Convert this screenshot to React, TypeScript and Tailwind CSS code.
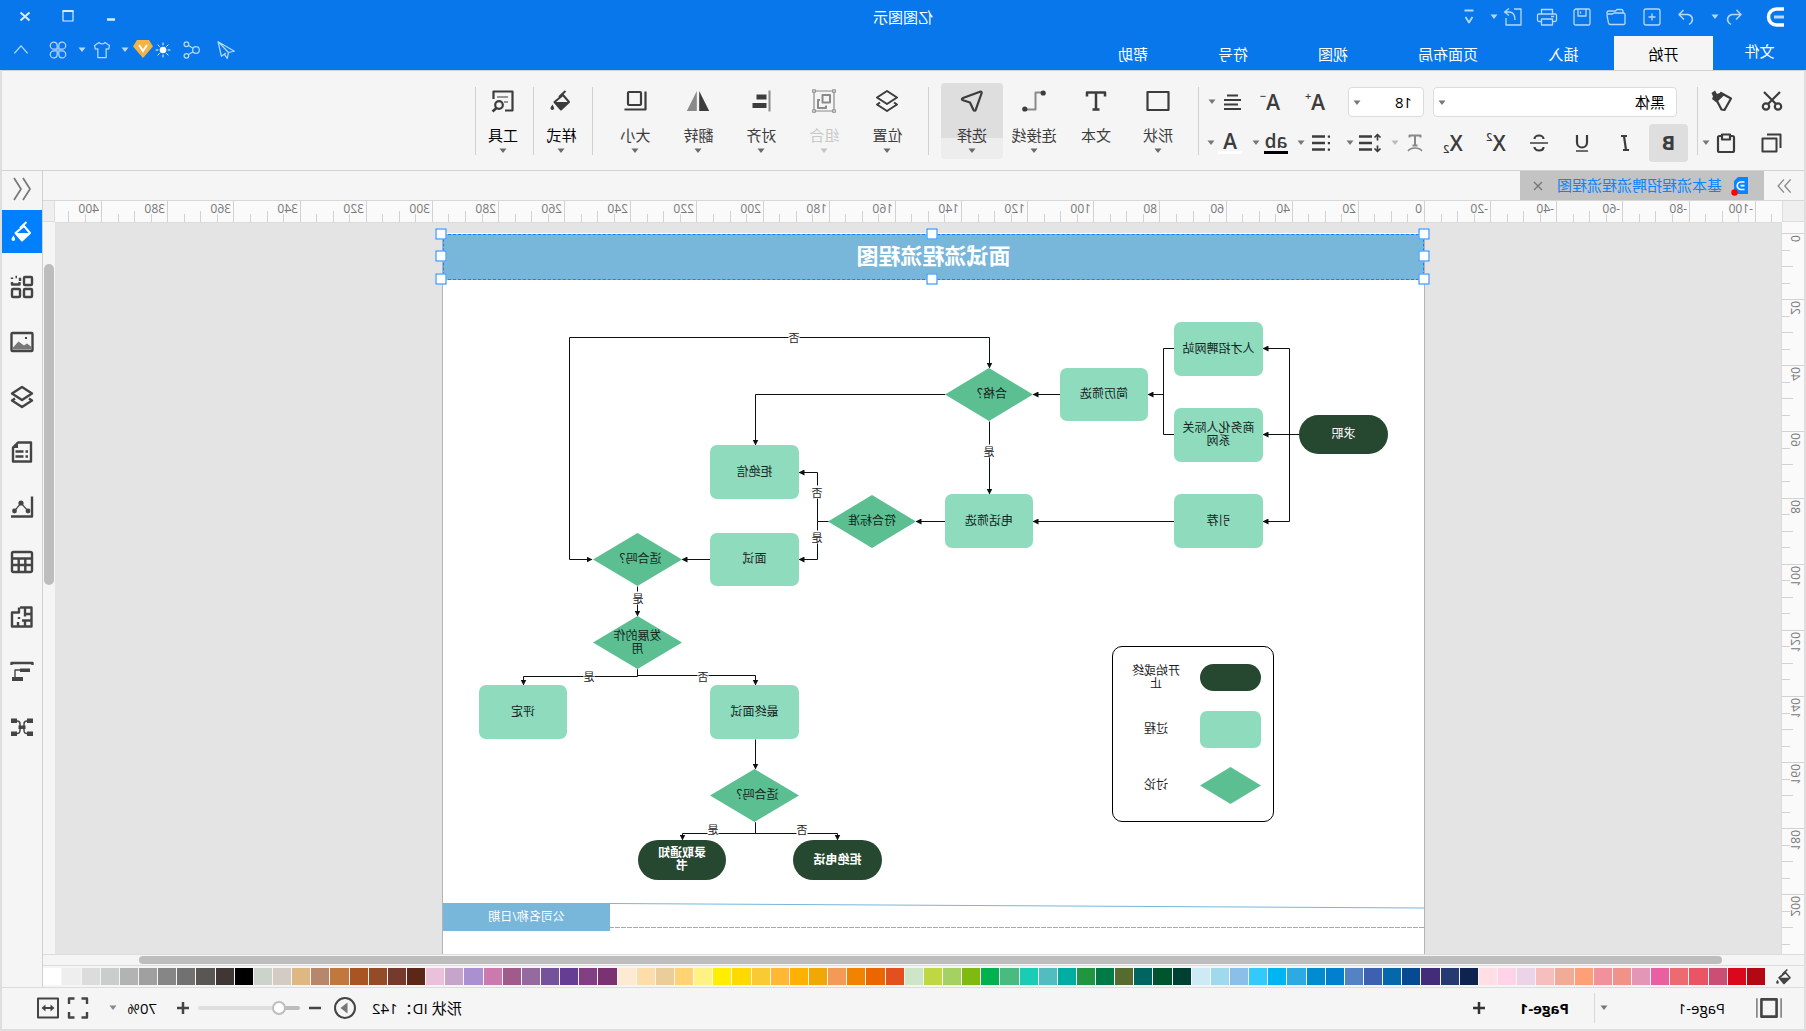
import React from "react";

type Kids = { children?: React.ReactNode };

function Svg({ size = 24, sw = 2, children }: Kids & { size?: number; sw?: number }) {
  return (
    <svg
      width={size}
      height={size}
      viewBox="0 0 24 24"
      fill="none"
      stroke="currentColor"
      strokeWidth={sw}
      strokeLinejoin="round"
      aria-hidden="true"
      className="shrink-0"
    >
      {children}
    </svg>
  );
}

function Caret({ className = "" }: { className?: string }) {
  return (
    <svg width="10" height="6" viewBox="0 0 10 6" fill="currentColor" aria-hidden="true" className={"shrink-0 " + className}>
      <path d="M1.5 0.5h7L5 5z" />
    </svg>
  );
}

function Btn({ label, className = "", children }: Kids & { label: string; className?: string }) {
  return (
    <button type="button" aria-label={label} className={"flex shrink-0 items-center justify-center " + className}>
      {children}
    </button>
  );
}

const F = { fill: "currentColor", stroke: "none" };

/* ---------- icons ---------- */
const icons: Record<string, React.ReactNode> = {
  undo: <path d="M9.5 5 5 9.500l5 5M5.500 9.500h8a5 5 0 0 1 3.500 8.500l-2 1.500" />,
  redo: <path d="M14.500 5 19 9.500l-5 5M18.500 9.500h-8a5 5 0 0 0-3.500 8.500l2 1.500" />,
  add: (
    <>
      <rect x="4" y="4" width="16" height="16" rx="2" />
      <path d="M12 8.500v7M8.500 12h7" />
    </>
  ),
  folder: (
    <>
      <path d="M5 8V6.500a2 2 0 0 1 2-2h4l1.500 1.500H19a2 2 0 0 1 2 2v1" />
      <path d="M3 18.500V9.500a1.500 1.500 0 0 1 1.500-1.500h9.500l1.500 1h4a1.500 1.500 0 0 1 1.500 1.500l-1.500 7.500a2 2 0 0 1-2 1.500H4.500A1.500 1.500 0 0 1 3 18.500z" />
    </>
  ),
  save: (
    <>
      <path d="M4 5.500A1.500 1.500 0 0 1 5.500 4h13L20 5.500v13a1.500 1.500 0 0 1-1.500 1.500h-13A1.500 1.500 0 0 1 4 18.500z" />
      <path d="M8 4v7h8V4M13.500 6.500v2" />
    </>
  ),
  print: (
    <>
      <path d="M6.500 9V4.500h11V9M6.500 16.500H4A1.500 1.500 0 0 1 2.500 15v-4.500A1.500 1.500 0 0 1 4 9h16a1.500 1.500 0 0 1 1.500 1.500V15a1.500 1.500 0 0 1-1.500 1.500h-2.500" />
      <path d="M6.500 14h11v6h-11zM5 11.500h3" />
    </>
  ),
  exportFile: (
    <>
      <path d="M11 4H4v16h15v-7" />
      <path d="M16 3.500 20.500 7 16 10.500M20 7h-4c-4 0-6 3-6 8" />
    </>
  ),
  send: <path d="M21.500 2 2 13.500l7 1.500L21.500 2l-4 17.500-5.500-4M9 15l1.500 7 3.500-5" />,
  share: (
    <>
      <circle cx="6" cy="12" r="4" />
      <circle cx="17.500" cy="5" r="2.800" />
      <circle cx="17.500" cy="19" r="2.800" />
      <path d="M9.500 10 15 6.500M9.500 14l5.500 3.500" />
    </>
  ),
  shirt: <path d="M8.500 3c1 2.200 6 2.200 7 0l5.500 3.500-1 4.500-3-.5V21H7V10.500l-3 .5-1-4.500z" />,
  petals: (
    <>
      <path d="M7 2.500h0a4 4 0 0 1 4 4V11H7a4.200 4.200 0 0 1 0-8.500z" />
      <path d="M17 2.500h0a4 4 0 0 0-4 4V11h4a4.200 4.200 0 0 0 0-8.500z" />
      <path d="M7 21.500h0a4 4 0 0 0 4-4V13H7a4.200 4.200 0 0 0 0 8.500z" />
      <path d="M17 21.500h0a4 4 0 0 1-4-4V13h4a4.200 4.200 0 0 1 0 8.500z" />
    </>
  ),
  cut: (
    <>
      <path d="M4 3l12 12M20 3 8 15" />
      <circle cx="6" cy="17.500" r="3.200" />
      <circle cx="18" cy="17.500" r="3.200" />
    </>
  ),
  brush: (
    <>
      <path d="M3 9.500 13 4l4.500 7-5 9.500-3 .5z" strokeWidth="2.200" />
      <path d="M9.500 6 13 3.500l4 1.500L19 1.500l3.500 2.500L21 7.500l1 2.500-4.500 3.500z" {...F} />
    </>
  ),
  copy: (
    <>
      <path d="M3.500 17V3.500H17" />
      <rect x="7.500" y="7.500" width="14" height="13" />
    </>
  ),
  paste: (
    <>
      <rect x="4" y="5" width="16" height="16" rx="1.500" />
      <path d="M8 3.500h8v5H8z" fill="#f5f5f5" />
    </>
  ),
  italic: <path d="M10 5h6M8 19h6M13 5l-2 14" />,
  underline: (
    <>
      <path d="M7 4v7.500a4.500 4.500 0 0 0 10 0V4" />
      <path d="M6 20h12" strokeWidth="1.500" />
    </>
  ),
  strike: (
    <>
      <path d="M16.500 8c0-2-2-3.500-4.500-3.500S7.500 6 7.500 8M7.500 16c0 2.200 2 3.500 4.500 3.500s4.500-1.500 4.500-3.500" />
      <path d="M3 12h18" strokeWidth="1.500" />
    </>
  ),
  clearFmt: (
    <>
      <path d="M6.500 6.500V4.500h11v2M12 4.500v10M9.500 14.500h5" />
      <path d="M5 20c3-4 11-4 14 0" strokeWidth="1.500" />
    </>
  ),
  alignR: <path d="M6 5.500h11M3 10h17M6 14.500h14M3 19h17" />,
  lineH: (
    <>
      <path d="M10 5.500h13M10 12h13M10 18.500h13" />
      <path d="M4.500 4.500v5M4.500 14.500v5M1.500 6.500l3-3 3 3M1.500 17.500l3 3 3-3" strokeWidth="1.700" />
    </>
  ),
  list: (
    <>
      <path d="M8 5.500h13M8 12h13M8 18.500h13" />
      <path d="M3 4.500h2.200v2.200H3zM3 11h2.200v2.200H3zM3 17.500h2.200v2.200H3z" {...F} />
    </>
  ),
  rect: <rect x="1.500" y="3" width="21" height="18" strokeWidth="2.200" />,
  text: <path d="M3 7.500V3.500h18v4M12 3.500v17M8.500 20.500h7" strokeWidth="2.500" />,
  connector: (
    <>
      <path d="M3 3.500h7.500v17H20" stroke="#8a8a8a" strokeWidth="2" />
      <circle cx="2.800" cy="4" r="2.600" {...F} />
      <circle cx="21.200" cy="20" r="2.600" {...F} />
    </>
  ),
  select: <path d="M2.500 4.500c-.6-1.500.3-2.200 1.500-1.800L21 9c1.500.6 1.500 1.800 0 2.200l-7 2.300-3.500 7.500c-.5 1-1.800 1-2.200-.2z" strokeWidth="2.200" />,
  layers: (
    <>
      <path d="M12 2 22 8.500 12 15 2 8.500z" />
      <path d="m5 13.500-3 2L12 22l10-6.500-3-2" />
    </>
  ),
  group: (
    <>
      <path d="M2 2h20v20H2z" strokeWidth="1.200" stroke="#8a8a8a" />
      <path
        d="M.7.7h2.600v2.600H.7zM20.700.7h2.600v2.600h-2.600zM.7 20.700h2.600v2.600H.7zM20.700 20.700h2.600v2.600h-2.600z"
        fill="#f5f5f5"
        strokeWidth="1.100"
        stroke="#8a8a8a"
      />
      <path d="M6 6h7.500v7.500H6z" strokeWidth="2" stroke="#8a8a8a" />
      <path d="M16 11h2v8h-8v-2.500" strokeWidth="2" stroke="#8a8a8a" />
    </>
  ),
  align: (
    <>
      <path d="M3.500 1.500v21" stroke="#8a8a8a" strokeWidth="2" />
      <path d="M6.500 5.500h10v5h-10zM6.500 14h14v5h-14z" {...F} />
    </>
  ),
  flip: (
    <>
      <path d="M10.800 2v20H.8z" {...F} />
      <path d="M13.200 2v20h10z" fill="#8a8a8a" stroke="none" />
    </>
  ),
  size: (
    <>
      <rect x="6" y="3" width="13" height="13" rx="1" strokeWidth="2.200" />
      <path d="M1.500 2.500v18H22.500" strokeWidth="2.200" />
    </>
  ),
  bucket: (
    <>
      <path d="M10 6 18.500 13 12 20.500 4 13z" />
      <path d="M4 13h14.500L12 21z" {...F} />
      <path d="M7.500 2 14 8" />
      <path d="M20.500 15.500c1.600 2.200 2 3 2 3.800a1.800 1.800 0 0 1-3.600 0c0-.8.400-1.600 1.600-3.800z" {...F} />
    </>
  ),
  tools: (
    <>
      <path d="M10 21.500H2.500v-19h19V10" strokeWidth="2.200" />
      <path d="M7 8h11M7 13h4" strokeWidth="1.600" stroke="#777" />
      <circle cx="16" cy="16" r="3.800" strokeWidth="2.200" />
      <path d="m18.500 19 4 3.500" strokeWidth="2.600" />
    </>
  ),
  chevL: <path d="M11 1 4 12l7 11M20 1l-7 11 7 11" />,
  chevR: <path d="M4 4l7 8-7 8M12 4l7 8-7 8" />,
  apps: (
    <>
      <rect x="2" y="2" width="8" height="8" rx="1" />
      <path d="M14 6V2.800M17 2h1.500M22 2.500v1.500M22 7v2.500h-7.500V7" />
      <rect x="2" y="14" width="8" height="8" rx="1" />
      <rect x="14" y="14" width="8" height="8" rx="1" />
    </>
  ),
  image: (
    <>
      <rect x="1.500" y="3" width="21" height="18" rx="1" />
      <path d="M3 19.500v-3l4-3 3 2 5.500-4 5.500 6v2z" fill="#777" stroke="none" />
      <path d="M7 7h2v2H7z" {...F} />
    </>
  ),
  doc: (
    <>
      <path d="M3 2.500h13l5 5v14H3z" />
      <path d="M16 2.500v5.500h5z" {...F} />
      <path d="M6 11.500h2.500M10.500 11.500h8M6 16.500h2.500M10.500 16.500h8" />
    </>
  ),
  chart: (
    <>
      <path d="M2 1.500v20h21" />
      <path d="M6 16 13 8l6.500 8" strokeWidth="1.200" />
      <circle cx="6" cy="16" r="2.400" {...F} />
      <circle cx="13" cy="8" r="2.600" {...F} />
      <circle cx="19.500" cy="16" r="2.400" {...F} />
    </>
  ),
  table: (
    <>
      <rect x="2" y="2" width="20" height="20" rx="1.500" />
      <path d="M2 8.500h20M2 15h20M8.700 8.500V22M15.300 8.500V22" />
    </>
  ),
  floor: (
    <>
      <path d="M14 2.500H2.500v19H22V7.500h-7V2.500" />
      <path d="M2.500 9H9V2.500M9 9v2.500M2.500 15.500H9V22M9 15.500h3M15 14v-2M16 21.500V17" />
    </>
  ),
  gantt: (
    <>
      <path d="M1.500 5V3h21v2" strokeWidth="2.400" />
      <path d="M4 8.500h10v3.500H4zM11 17h11v4H11z" {...F} />
      <path d="M14 10h5v7" strokeWidth="1.400" />
    </>
  ),
  mind: (
    <>
      <path d="M1 3.500h6v4.500H1zM17 3.500h6v4.500h-6zM1 16.500h6v4.500H1zM17 16.500h6v4.500h-6zM8.500 10.500h7v3.500h-7z" {...F} />
      <path d="M7 6c3 0 3 1.500 3 3v6c0 2 0 3.500-3 3.500M17 6c-3 0-3 1.500-3 3v6c0 2 0 3.500 3 3.500" strokeWidth="1.500" />
    </>
  ),
  pageView: (
    <>
      <rect x="5" y="4" width="14" height="16" strokeWidth="2.400" />
      <path d="M.8 3v18M23.200 3v18" stroke="#888" strokeWidth="1.600" />
    </>
  ),
  play: (
    <>
      <circle cx="12" cy="12" r="10" />
      <path d="M9.500 6.500v11l7-5.500z" fill="#777" stroke="none" />
    </>
  ),
  full: <path d="M3 8V2.500h5.500M15.500 2.500H21V8M21 16v5.500h-5.500M8.500 21.500H3V16" strokeWidth="2.400" />,
  fit: (
    <>
      <rect x="2" y="2.500" width="20" height="19" strokeWidth="2" />
      <path d="M7 12h10" strokeWidth="2" />
      <path d="M9.500 8.500v7L5.500 12zM14.500 8.500v7l4-3.500z" {...F} />
    </>
  ),
};

/* ---------- header ---------- */
function Header() {
  return (
    <header className="h-[70px] shrink-0 bg-[#0977ec] text-[15px] text-white">
      <div className="grid h-[34px] grid-cols-[1fr_auto_1fr] items-center">
        <div className="flex items-center pl-[19px] text-[#b5d8fb]">
          <svg width="24" height="24" viewBox="0 0 24 24" fill="none" stroke="#fff" strokeWidth="3.500" aria-hidden="true">
            <path d="M3 4h7.500a8 8 0 0 1 0 16H3" />
            <path d="M3 12h10" stroke="#b5d8fb" strokeWidth="3" />
          </svg>
          <Btn label="撤销" className="ml-[17px]"><Svg sw={1.500}>{icons.undo}</Svg></Btn>
          <Caret className="ml-[2px]" />
          <Btn label="重做" className="ml-3"><Svg sw={1.500}>{icons.redo}</Svg></Btn>
          <Btn label="新建" className="ml-[10px]"><Svg sw={1.300}>{icons.add}</Svg></Btn>
          <Btn label="打开" className="ml-3"><Svg sw={1.300}>{icons.folder}</Svg></Btn>
          <Btn label="保存" className="ml-[10px]"><Svg sw={1.300}>{icons.save}</Svg></Btn>
          <Btn label="打印" className="ml-[11px]"><Svg sw={1.300}>{icons.print}</Svg></Btn>
          <Btn label="导出" className="ml-[10px]"><Svg sw={1.300}>{icons.exportFile}</Svg></Btn>
          <Caret className="ml-[2px]" />
          <Btn label="更多" className="ml-2">
            <Svg sw={1.800}><path d="M7.500 5.500h9M8.500 12l3.500 5.500 3.500-5.500" /></Svg>
          </Btn>
        </div>
        <h1>亿图图示</h1>
        <div className="flex items-center justify-end gap-[19px] pr-[13px] text-[#d9ecff]">
          <Btn label="最小化"><Svg><path d="M8 14.500h8" strokeWidth="2.500" /></Svg></Btn>
          <Btn label="最大化"><Svg sw={1.200}><rect x="7" y="6" width="10" height="10" /><path d="M6.500 6h11" strokeWidth="2" /></Svg></Btn>
          <Btn label="关闭"><Svg><path d="m7.500 7.500 9 8M16.500 7.500l-9 8" /></Svg></Btn>
        </div>
      </div>
      <div className="flex h-[36px] items-end justify-between">
        <nav className="flex h-[34px] items-center">
          <button type="button" className="h-full w-[93px] pb-1">文件</button>
          <button type="button" className="h-full w-[99px] bg-[#f5f5f5] pt-[2px] text-black">开始</button>
          <button type="button" className="h-full w-[101px] pt-[2px]">插入</button>
          <button type="button" className="h-full w-[130px] pt-[2px]">页面布局</button>
          <button type="button" className="h-full w-[100px] pt-[2px]">视图</button>
          <button type="button" className="h-full w-[100px] pt-[2px]">符号</button>
          <button type="button" className="h-full w-[100px] pt-[2px]">帮助</button>
        </nav>
        <div className="flex h-[40px] items-center pr-[11px] text-[#b5d8fb]">
          <Btn label="发送"><Svg size={20} sw={1.500}>{icons.send}</Svg></Btn>
          <Btn label="分享" className="ml-[15px]"><Svg size={20} sw={1.500}>{icons.share}</Svg></Btn>
          <Btn label="提示" className="ml-[10px] text-white">
            <Svg size={16} sw={1.500}>
              <circle cx="12" cy="12" r="5" fill="currentColor" stroke="none" />
              <path d="M12 1v4M12 19v4M1 12h4M19 12h4M4 4l3 3M17 17l3 3M20 4l-3 3M7 17l-3 3" />
            </Svg>
          </Btn>
          <Btn label="会员" className="ml-[2px]">
            <svg width="20" height="22" viewBox="0 0 20 22" aria-hidden="true">
              <path d="M4 1h12l4 6.500L10 19 0 7.500z" fill="#f5b342" />
              <path d="M6 6 10 12l4-6" fill="none" stroke="#fff" strokeWidth="2" />
            </svg>
          </Btn>
          <Caret className="ml-[3px]" />
          <Btn label="主题" className="ml-2"><Svg size={20} sw={1.500}>{icons.shirt}</Svg></Btn>
          <Caret className="ml-[5px]" />
          <Btn label="应用" className="ml-[9px]"><Svg size={20} sw={1.500}>{icons.petals}</Svg></Btn>
          <Btn label="折叠功能区" className="ml-[17px]"><Svg size={20} sw={1.600}><path d="m4 16 8-9 8 9" /></Svg></Btn>
        </div>
      </div>
    </header>
  );
}

/* ---------- ribbon ---------- */
function Divider() {
  return <div className="mt-4 h-[68px] w-px shrink-0 bg-[#d0d0d0]" />;
}

function Picker({ label, options, className }: { label: string; options: string[]; className: string }) {
  return (
    <div className={"relative h-[30px] shrink-0 rounded-sm border border-[#dcdcdc] bg-white " + className}>
      <select aria-label={label} className="h-full w-full appearance-none bg-transparent pl-[11px] text-[15px] text-black outline-none">
        {options.map((o) => (
          <option key={o}>{o}</option>
        ))}
      </select>
      <Caret className="pointer-events-none absolute top-3 right-[3px] text-[#777]" />
    </div>
  );
}

function Glyph({ children, mark, sub }: Kids & { mark: string; sub?: boolean }) {
  return (
    <span className="flex h-6 w-6 items-center justify-center text-[21px] leading-6 font-semibold">
      {children}
      <span className={"text-[11px] leading-3 " + (sub ? "self-end" : "self-start")}>{mark}</span>
    </span>
  );
}

function Big({
  label,
  icon,
  className = "w-[62px]",
  labelClass = "",
  caret = true,
}: {
  label: string;
  icon: string;
  className?: string;
  labelClass?: string;
  caret?: boolean;
}) {
  return (
    <button type="button" className={"mt-3 flex h-[76px] shrink-0 flex-col items-center rounded-sm pt-[6px] " + className}>
      <Svg>{icons[icon]}</Svg>
      <span className={"mt-[11px] h-[22px] text-[15px] leading-[22px] whitespace-nowrap " + labelClass}>{label}</span>
      {caret && <Caret className="mt-[2px] opacity-75" />}
    </button>
  );
}

function Ribbon() {
  return (
    <div role="toolbar" aria-label="开始" className="flex h-[101px] shrink-0 items-start border-y border-[#d2d2d2] text-[#3c3c3c]">
      <div className="flex w-[106px] shrink-0 flex-col gap-[7px] pt-4 pl-5">
        <div className="flex h-[30px] items-center pb-[2px]">
          <Btn label="剪切"><Svg sw={2.200}>{icons.cut}</Svg></Btn>
          <Btn label="格式刷" className="ml-[26px]"><Svg>{icons.brush}</Svg></Btn>
        </div>
        <div className="flex h-[38px] items-center">
          <Btn label="复制"><Svg>{icons.copy}</Svg></Btn>
          <Btn label="粘贴" className="ml-[22px]"><Svg sw={2.200}>{icons.paste}</Svg></Btn>
          <Caret className="ml-[3px] text-[#777]" />
        </div>
      </div>
      <Divider />
      <div className="flex w-[498px] shrink-0 flex-col gap-[7px] pt-4">
        <div className="flex h-[30px] items-center pl-5">
          <Picker label="字体" options={["黑体"]} className="w-[244px]" />
          <Picker label="字号" options={["18"]} className="ml-[9px] w-[76px]" />
          <Btn label="增大字号" className="ml-[21px]"><Glyph mark="+">A</Glyph></Btn>
          <Btn label="减小字号" className="ml-[21px]"><Glyph mark="−">A</Glyph></Btn>
          <Btn label="对齐方式" className="ml-[14px]"><Svg sw={2.200}>{icons.alignR}</Svg></Btn>
          <Caret className="ml-[3px] text-[#777]" />
        </div>
        <div className="flex h-[38px] items-center pl-[9px]">
          <Btn label="加粗" className="h-[38px] w-[39px] rounded-sm bg-[#dedede]">
            <span className="text-[20px] font-bold">B</span>
          </Btn>
          <Btn label="倾斜" className="ml-3"><Svg sw={2.200}>{icons.italic}</Svg></Btn>
          <Btn label="下划线" className="ml-[19px]"><Svg sw={2.200}>{icons.underline}</Svg></Btn>
          <Btn label="删除线" className="ml-[19px]"><Svg sw={2.200}>{icons.strike}</Svg></Btn>
          <Btn label="上标" className="ml-[19px]"><Glyph mark="2">X</Glyph></Btn>
          <Btn label="下标" className="ml-[19px]"><Glyph mark="2" sub>X</Glyph></Btn>
          <Btn label="清除格式" className="ml-[14px] text-[#888]"><Svg sw={2}>{icons.clearFmt}</Svg></Btn>
          <Caret className="ml-[3px] text-[#bbb]" />
          <Btn label="行距" className="ml-2"><Svg sw={2.400}>{icons.lineH}</Svg></Btn>
          <Caret className="ml-[3px] text-[#777]" />
          <Btn label="项目符号" className="ml-3"><Svg sw={2.400}>{icons.list}</Svg></Btn>
          <Caret className="ml-[3px] text-[#777]" />
          <Btn label="突出显示" className="ml-2">
            <span className="h-[22px] w-6 border-b-3 border-black text-center text-[19px] leading-[18px] font-semibold">ab</span>
          </Btn>
          <Caret className="ml-[3px] text-[#777]" />
          <Btn label="字体颜色" className="ml-[9px]">
            <span className="h-[22px] w-6 border-b-3 border-white text-center text-[21px] leading-[18px] font-semibold">A</span>
          </Btn>
          <Caret className="ml-[2px] text-[#777]" />
        </div>
      </div>
      <Divider />
      <div className="ml-[9px] flex">
        <Big label="形状" icon="rect" />
        <Big label="文本" icon="text" caret={false} />
        <Big label="连接线" icon="connector" />
        <Big label="选择" icon="select" className="w-[62px] bg-[linear-gradient(#dedede_55px,#ededed_55px)]" />
      </div>
      <div className="w-3" />
      <Divider />
      <div className="mr-[11px] ml-[9px] flex">
        <Big label="位置" icon="layers" className="w-[63px]" />
        <Big label="组合" icon="group" className="w-[63px] text-[#b4b4b4]" labelClass="text-[#c8c8c8]" />
        <Big label="对齐" icon="align" className="w-[63px]" />
        <Big label="翻转" icon="flip" className="w-[63px]" />
        <Big label="大小" icon="size" className="w-[63px]" />
      </div>
      <Divider />
      <Big label="样式" icon="bucket" className="w-[58px] pl-[3px]" labelClass="text-black" />
      <Divider />
      <Big label="工具" icon="tools" className="w-[57px] pl-[3px]" labelClass="text-black" />
      <Divider />
    </div>
  );
}

/* ---------- rulers ---------- */
const UNIT = 3.307;

function range(from: number, to: number, step: number) {
  const out: number[] = [];
  for (let v = from; v <= to; v += step) out.push(v);
  return out;
}

function RulerH() {
  return (
    <svg width="100%" height="21" className="block bg-[#fafafa] text-[12px]" aria-label="水平标尺">
      {range(-105, 410, 5).map((v) => {
        const x = Math.round(357 + v * UNIT);
        const y = v % 20 === 0 ? 0 : v % 10 === 0 ? 10 : 13;
        return <rect key={v} x={x} y={y} width="1" height={21 - y} fill="#d2d2d2" />;
      })}
      {range(-100, 400, 20).map((v) => (
        <text key={v} x={Math.round(357 + v * UNIT) + 3} y="12" fill="#777">
          {v}
        </text>
      ))}
    </svg>
  );
}

function RulerV() {
  return (
    <svg width="22" height="100%" className="block bg-[#fafafa] text-[12px]" aria-label="垂直标尺">
      {range(0, 240, 5).map((v) => {
        const y = Math.round(11 + v * UNIT);
        const w = v % 20 === 0 ? 22 : v % 10 === 0 ? 11 : 8;
        return <rect key={v} x={22 - w} y={y} width={w} height="1" fill="#d2d2d2" />;
      })}
      {range(0, 200, 20).map((v) => {
        const y = Math.round(11 + v * UNIT) + 2;
        return (
          <text key={v} x="13" y={y} textAnchor="end" transform={"rotate(-90 13 " + y + ")"} fill="#777">
            {v}
          </text>
        );
      })}
    </svg>
  );
}

/* ---------- diagram ---------- */
type Kind = "process" | "decision" | "terminal" | "outcome";
type Node = { kind: Kind; x: number; y: number; w: number; h: number; text: string };

const nodes: Node[] = [
  { kind: "terminal", x: 37, y: 182, w: 89, h: 39, text: "求职" },
  { kind: "process", x: 162, y: 89, w: 89, h: 54, text: "人才招聘网站" },
  { kind: "process", x: 162, y: 175, w: 89, h: 54, text: "商务化人际关系网" },
  { kind: "process", x: 162, y: 261, w: 89, h: 54, text: "引荐" },
  { kind: "process", x: 277, y: 135, w: 88, h: 53, text: "简历筛选" },
  { kind: "decision", x: 392, y: 135, w: 88, h: 53, text: "合格？" },
  { kind: "process", x: 392, y: 261, w: 88, h: 54, text: "电话筛选" },
  { kind: "decision", x: 509, y: 262, w: 88, h: 53, text: "符合标准" },
  { kind: "process", x: 626, y: 212, w: 89, h: 54, text: "拒绝信" },
  { kind: "process", x: 626, y: 300, w: 89, h: 53, text: "面试" },
  { kind: "decision", x: 743, y: 300, w: 89, h: 53, text: "适合吗？" },
  { kind: "decision", x: 743, y: 383, w: 89, h: 53, text: "发展的作用" },
  { kind: "process", x: 858, y: 452, w: 88, h: 54, text: "评定" },
  { kind: "process", x: 626, y: 452, w: 89, h: 54, text: "最终面试" },
  { kind: "decision", x: 626, y: 536, w: 89, h: 53, text: "适合吗？" },
  { kind: "outcome", x: 699, y: 607, w: 88, h: 40, text: "录取通知书" },
  { kind: "outcome", x: 543, y: 607, w: 89, h: 40, text: "拒绝电话" },
  { kind: "terminal", x: 164, y: 431, w: 61, h: 27, text: "" },
  { kind: "process", x: 164, y: 478, w: 61, h: 37, text: "" },
  { kind: "decision", x: 164, y: 534, w: 61, h: 37, text: "" },
];

const kindClass: Record<Kind, string> = {
  process: "rounded-[7px] bg-[#8edbbd] px-[7px] text-[#16241d]",
  decision: "bg-[#5bbf92] px-[18px] text-[#16241d] [clip-path:polygon(50%_0,100%_50%,50%_100%,0_50%)]",
  terminal: "rounded-full bg-[#274830] px-[7px] text-white",
  outcome: "rounded-full bg-[#274830] px-[18px] font-bold text-white",
};

const arrows = [
  "M136 201V115H162",
  "M126 201H162",
  "M136 201V288H162",
  "M262 161H277",
  "M365 161H392",
  "M251 288H392",
  "M436 188V260",
  "M480 161H670V211",
  "M856 326V104H436V134",
  "M480 288H509",
  "M608 288V239H626",
  "M608 288V326H626",
  "M715 326H743",
  "M788 353V382",
  "M788 436V442H670V451",
  "M788 436V443H902V451",
  "M670 506V535",
  "M670 589V600H743V606",
  "M670 589V600H588V606",
  "M856 326H834",
];

const plain = ["M251 115H262V201H251", "M596 288H608"];

const tags: [number, number, string][] = [
  [631, 104, "否"],
  [436, 218, "是"],
  [608, 259, "否"],
  [608, 304, "是"],
  [787, 365, "是"],
  [836, 443, "是"],
  [722, 443, "否"],
  [712, 596, "是"],
  [623, 596, "否"],
];

const legend: [number, string][] = [
  [444, "开始或终止"],
  [495, "过程"],
  [551, "讨论"],
];

const handles: [number, number][] = [
  [0, 1], [0, 23], [0, 46], [492, 1], [492, 46], [983, 1], [983, 23], [983, 46],
];

function Diagram() {
  return (
    <div className="relative mt-[10px] ml-[356px] h-full w-[983px] shrink-0 border-x border-[#b4b4b4] bg-white text-[12px] leading-[13px]">
      <div className="absolute top-px right-0 left-0 flex h-[46px] items-center justify-center border border-dashed border-[#0a84ff] bg-[#78b6da] pb-[4px] text-[22px] font-bold text-white">
        面试流程流程图
      </div>
      {handles.map(([x, y]) => (
        <span
          key={x + "-" + y}
          className="absolute h-[11px] w-[11px] -translate-x-1/2 -translate-y-1/2 border border-[#0a84ff] bg-white"
          style={{ left: x, top: y }}
        />
      ))}
      <div className="absolute top-[413px] left-[150px] h-[176px] w-[162px] rounded-[10px] border border-black" />
      <svg className="absolute top-0 left-0" width="981" height="722" fill="none" stroke="#0c130f" aria-hidden="true">
        <defs>
          <marker id="head" viewBox="0 0 6 6" refX="5" refY="3" markerWidth="6" markerHeight="6" orient="auto">
            <path d="M0 0 6 3 0 6z" fill="#0c130f" stroke="none" />
          </marker>
        </defs>
        <g transform="translate(-1.5 .5)">
          {arrows.map((d) => (
            <path key={d} d={d} markerEnd="url(#head)" />
          ))}
          {plain.map((d) => (
            <path key={d} d={d} />
          ))}
        </g>
        <path d="M0 675 815 670.500" stroke="#78b6da" />
        <path d="M0 694.500H815" stroke="#a8a8a8" strokeDasharray="5 1" />
      </svg>
      {nodes.map((n) => (
        <div
          key={n.x + "-" + n.y}
          className={"absolute flex items-center justify-center pb-[2px] text-center " + kindClass[n.kind]}
          style={{ left: n.x - 1, top: n.y, width: n.w, height: n.h }}
        >
          {n.text}
        </div>
      ))}
      {tags.map(([x, y, t]) => (
        <span
          key={x + "-" + y}
          className="absolute -translate-x-1/2 -translate-y-1/2 bg-white text-[11px] text-[#222]"
          style={{ left: x - 1, top: y }}
        >
          {t}
        </span>
      ))}
      {legend.map(([y, t]) => (
        <span key={t} className="absolute w-[52px] -translate-x-1/2 -translate-y-1/2 text-center text-[#222]" style={{ left: 268, top: y }}>
          {t}
        </span>
      ))}
      <div className="absolute top-[670px] right-0 flex h-[28px] w-[167px] items-center justify-center bg-[#78b6da] pb-[2px] text-white">
        公司名称/日期
      </div>
    </div>
  );
}

/* ---------- palette ---------- */
const palette =
  "b40714 db081d c94f77 e95565 ec6a70 e95f9f e396b5 f0918a f2909b ff9f78 f2ab96 f6bfbd ebd4ea ffd4e6 ffdfe5 0e2350 243a70 432c78 084a92 0468ab 3e60b0 5582c5 0080cf 008ccf 2daae4 00b5f1 33c9fa 8abfea 9ed9ee cdeaf5 004033 00552f 006460 556b2f 007a47 1f963f 00ada0 52bdc0 1accb4 4abb80 00b150 80b910 a5d062 bed742 cde6c7 e2501f ea6700 f08300 f29a56 f1a706 ffb000 ffb833 f9ca34 ffd900 ffee00 fef284 ffd274 eacd98 ffddab fdead2 7a3272 823f84 663d94 74539a 956a9f a05a8c cb7ab0 aa90d0 c6a5cb ebc0da 5b2818 75392d 944c27 a95423 c1783f b6866d dfb783 d4cbc5 cbd3cb 000000 3e3736 595656 717171 868686 9fa09f b2b4b3 cbcdcc dcdcdc eeeeee ffffff".split(" ");

function Workspace() {
  return (
    <div className="flex min-w-0 flex-1 flex-col">
      <div className="flex h-[30px] shrink-0 items-stretch border-b border-[#d8d8d8]">
        <Btn label="展开左侧面板" className="w-10 text-[#888]"><Svg size={20} sw={1.600}>{icons.chevR}</Svg></Btn>
        <div className="flex w-[244px] items-center bg-[#c3c3c3] pl-[15px]">
          <svg width="18" height="20" viewBox="0 0 18 20" aria-hidden="true">
            <path d="M1 1h10l4 4v13H1z" fill="#0a84ff" />
            <path d="M4.500 6h3.500a3.500 3.500 0 0 1 0 7.500H4.500M4.500 9.700h4" fill="none" stroke="#fff" strokeWidth="1.700" />
            <circle cx="14.500" cy="16.500" r="3.200" fill="#f00" />
          </svg>
          <a href="#doc" className="ml-[9px] text-[15px] whitespace-nowrap text-[#0a84ff]">基本流程招聘流程流程图</a>
          <Btn label="关闭标签" className="ml-[13px] text-[#777]">
            <svg width="12" height="12" viewBox="0 0 12 12" fill="none" stroke="currentColor" strokeWidth="1.400"><path d="m2 2 8 8M10 2l-8 8" /></svg>
          </Btn>
        </div>
      </div>
      <div className="grid min-h-0 flex-1 grid-cols-[22px_minmax(0,1fr)_12px] grid-rows-[21px_minmax(0,1fr)_12px]">
        <div className="border-r border-b border-[#dcdcdc] bg-[#efefef]" />
        <div className="overflow-hidden"><RulerH /></div>
        <div className="border-b border-l border-[#dcdcdc] bg-[#efefef]" />
        <div className="overflow-hidden"><RulerV /></div>
        <main className="overflow-hidden border-t border-l border-[#dcdcdc] bg-[#e4e4e4]"><Diagram /></main>
        <div className="px-px pt-[42px]"><div className="h-[321px] rounded-full bg-[#bdbdbd]" /></div>
        <div className="col-span-3 border-y border-[#dcdcdc] py-px pr-[96px] pl-[82px]"><div className="h-full rounded-full bg-[#bdbdbd]" /></div>
      </div>
      <div className="flex h-[21px] shrink-0 items-center">
        <Btn label="填充颜色" className="w-[39px]"><Svg size={18} sw={2.200}>{icons.bucket}</Svg></Btn>
        <div className="flex h-[17px] flex-1 gap-px">
          {palette.map((c) => (
            <button key={c} type="button" aria-label={"#" + c} className="h-full flex-1" style={{ backgroundColor: "#" + c }} />
          ))}
        </div>
      </div>
    </div>
  );
}

const side = [
  ["符号库", "apps"],
  ["图像", "image"],
  ["图层", "layers"],
  ["备注", "doc"],
  ["图表", "chart"],
  ["表格", "table"],
  ["平面图", "floor"],
  ["甘特图", "gantt"],
  ["思维导图", "mind"],
];

function Sidebar() {
  return (
    <aside className="flex w-[41px] shrink-0 flex-col border-l border-[#d0d0d0]">
      <Btn label="折叠面板" className="h-[39px] pb-1 text-[#777]"><Svg sw={1.700}>{icons.chevL}</Svg></Btn>
      <div className="flex flex-col gap-3">
        <Btn label="样式" className="h-[43px] bg-[#0080ff] text-white"><Svg>{icons.bucket}</Svg></Btn>
        {side.map(([l, i]) => (
          <Btn key={l} label={l} className="h-[43px]"><Svg size={24} sw={2.400}>{icons[i]}</Svg></Btn>
        ))}
      </div>
    </aside>
  );
}

function StatusBar() {
  return (
    <footer className="flex h-[42px] shrink-0 items-center justify-between border-t border-[#dcdcdc] text-[15px] text-black">
      <div className="flex h-full items-center pb-px">
        <Btn label="页面视图" className="ml-[22px] text-[#444]"><Svg size={26}>{icons.pageView}</Svg></Btn>
        <div className="relative ml-[31px] w-[130px]">
          <select aria-label="页面" className="w-full appearance-none bg-transparent outline-none">
            <option>Page-1</option>
          </select>
          <Caret className="pointer-events-none absolute top-2 right-1 text-[#777]" />
        </div>
        <div className="h-[30px] w-px bg-[#d8d8d8]" />
        <button type="button" className="ml-[25px] font-bold">Page-1</button>
        <Btn label="新增页面" className="ml-[29px] text-[#333]"><Svg sw={2.500}><path d="M12 6v12M6 12h12" /></Svg></Btn>
      </div>
      <div className="flex h-full items-center pr-[34px] pb-px text-[#444]">
        <span className="text-black">形状 ID：142</span>
        <Btn label="演示" className="ml-[15px]"><Svg>{icons.play}</Svg></Btn>
        <Btn label="缩小" className="ml-[6px]"><Svg sw={2.500}><path d="M6 12h12" /></Svg></Btn>
        <input
          type="range"
          aria-label="缩放"
          defaultValue={16}
          className="ml-[3px] h-[14px] w-[102px] appearance-none bg-transparent [&::-webkit-slider-runnable-track]:h-1 [&::-webkit-slider-runnable-track]:rounded-full [&::-webkit-slider-runnable-track]:bg-[linear-gradient(to_right,#bdbdbd_20px,#dedede_20px)] [&::-webkit-slider-thumb]:-mt-[5px] [&::-webkit-slider-thumb]:h-[14px] [&::-webkit-slider-thumb]:w-[14px] [&::-webkit-slider-thumb]:appearance-none [&::-webkit-slider-thumb]:rounded-full [&::-webkit-slider-thumb]:border-2 [&::-webkit-slider-thumb]:border-[#bdbdbd] [&::-webkit-slider-thumb]:bg-white"
        />
        <Btn label="放大" className="ml-[3px]"><Svg sw={2.500}><path d="M12 6v12M6 12h12" /></Svg></Btn>
        <button type="button" className="ml-[14px] flex w-[49px] items-center justify-between text-black">
          70%
          <Caret className="text-[#888]" />
        </button>
        <Btn label="全屏" className="ml-[18px]"><Svg>{icons.full}</Svg></Btn>
        <Btn label="适应宽度" className="ml-[6px]"><Svg>{icons.fit}</Svg></Btn>
      </div>
    </footer>
  );
}

export default function App() {
  return (
    <div className="flex h-screen w-full -scale-x-100 flex-col overflow-hidden bg-[#f5f5f5] font-['Open_Sans','Noto_Sans_CJK_SC',sans-serif]">
      <Header />
      <div className="flex min-h-0 flex-1 flex-col border-x-2 border-b-2 border-[#dedede] text-[#444]">
        <Ribbon />
        <div className="flex min-h-0 flex-1">
          <Workspace />
          <Sidebar />
        </div>
        <StatusBar />
      </div>
    </div>
  );
}
